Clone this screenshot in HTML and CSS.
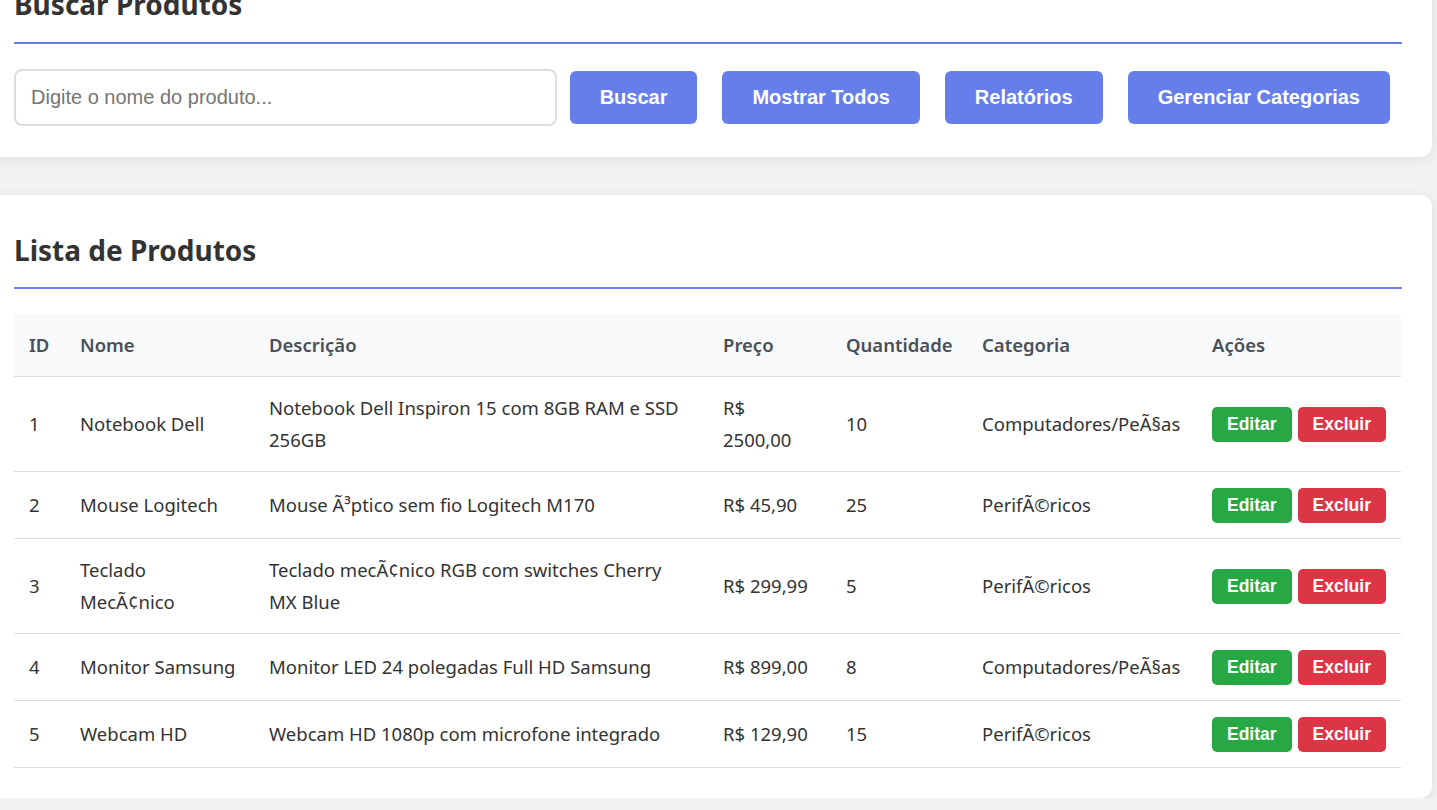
FILE: index.html
```html
<!DOCTYPE html>
<html lang="pt-BR">
<head>
<meta charset="utf-8">
<title>Produtos</title>
<link rel="stylesheet" href="styles.css">
</head>
<body>
<div class="page">
  <section class="card search-card">
    <h2 class="card-title">Buscar Produtos</h2>
    <div class="search-row">
      <input class="search-input" type="text" placeholder="Digite o nome do produto...">
      <button class="btn">Buscar</button>
      <button class="btn">Mostrar Todos</button>
      <button class="btn">Relatórios</button>
      <button class="btn">Gerenciar Categorias</button>
    </div>
  </section>

  <section class="card list-card">
    <h2 class="card-title">Lista de Produtos</h2>
    <table class="products">
      <colgroup>
        <col class="col-id">
        <col class="col-nome">
        <col class="col-desc">
        <col class="col-preco">
        <col class="col-qtd">
        <col class="col-cat">
        <col class="col-acoes">
      </colgroup>
      <thead>
        <tr>
          <th>ID</th>
          <th>Nome</th>
          <th>Descrição</th>
          <th>Preço</th>
          <th>Quantidade</th>
          <th>Categoria</th>
          <th>Ações</th>
        </tr>
      </thead>
      <tbody>
        <tr>
          <td>1</td>
          <td>Notebook Dell</td>
          <td>Notebook Dell Inspiron 15 com 8GB RAM e SSD 256GB</td>
          <td>R$ 2500,00</td>
          <td>10</td>
          <td class="cat">Computadores/PeÃ§as</td>
          <td><div class="actions"><button class="btn-sm btn-edit">Editar</button><button class="btn-sm btn-del">Excluir</button></div></td>
        </tr>
        <tr>
          <td>2</td>
          <td>Mouse Logitech</td>
          <td>Mouse Ã³ptico sem fio Logitech M170</td>
          <td>R$ 45,90</td>
          <td>25</td>
          <td class="cat">PerifÃ©ricos</td>
          <td><div class="actions"><button class="btn-sm btn-edit">Editar</button><button class="btn-sm btn-del">Excluir</button></div></td>
        </tr>
        <tr>
          <td>3</td>
          <td>Teclado MecÃ¢nico</td>
          <td>Teclado mecÃ¢nico RGB com switches Cherry MX Blue</td>
          <td>R$ 299,99</td>
          <td>5</td>
          <td class="cat">PerifÃ©ricos</td>
          <td><div class="actions"><button class="btn-sm btn-edit">Editar</button><button class="btn-sm btn-del">Excluir</button></div></td>
        </tr>
        <tr>
          <td>4</td>
          <td>Monitor Samsung</td>
          <td>Monitor LED 24 polegadas Full HD Samsung</td>
          <td>R$ 899,00</td>
          <td>8</td>
          <td class="cat">Computadores/PeÃ§as</td>
          <td><div class="actions"><button class="btn-sm btn-edit">Editar</button><button class="btn-sm btn-del">Excluir</button></div></td>
        </tr>
        <tr>
          <td>5</td>
          <td>Webcam HD</td>
          <td>Webcam HD 1080p com microfone integrado</td>
          <td>R$ 129,90</td>
          <td>15</td>
          <td class="cat">PerifÃ©ricos</td>
          <td><div class="actions"><button class="btn-sm btn-edit">Editar</button><button class="btn-sm btn-del">Excluir</button></div></td>
        </tr>
      </tbody>
    </table>
  </section>
</div>
</body>
</html>
```

FILE: styles.css
```css
* { box-sizing: border-box; }

html, body {
  margin: 0;
  padding: 0;
  background: #f2f2f2;
  overflow: hidden;
}

body {
  font-family: "Noto Sans", "Open Sans", sans-serif;
  font-size: 18.5px;
  line-height: 32px;
  color: #333;
}

.page {
  width: 1448px;
  margin: -49px 0 0 -16px;
}

.card {
  background: #fff;
  border-radius: 12px;
  box-shadow: 0 2px 12px rgba(0, 0, 0, 0.09);
  padding: 30px;
}

.search-card {
  padding-bottom: 31px;
  margin-bottom: 38px;
}

.list-card {
  padding-top: 32px;
}

.card-title {
  margin: 7px 0 25px;
  padding-bottom: 20px;
  border-bottom: 2px solid #667eea;
  font-size: 28px;
  line-height: 33.6px;
  font-weight: 700;
  color: #333;
}

.search-row {
  display: flex;
  align-items: center;
  gap: 13px;
}

.search-input {
  flex: 1;
  min-width: 0;
  height: 57px;
  padding: 15px;
  border: 2px solid #ddd;
  border-radius: 8px;
  font-family: "Liberation Sans", Arial, sans-serif;
  font-size: 20px;
  color: #333;
  outline: none;
}

.search-input::placeholder {
  color: #757575;
}

.btn {
  margin-right: 12px;
  padding: 15px 30px;
  border: none;
  border-radius: 6px;
  background: #667eea;
  color: #fff;
  font-family: "Liberation Sans", Arial, sans-serif;
  font-size: 20px;
  font-weight: 700;
  line-height: 23px;
  white-space: nowrap;
  cursor: pointer;
}

.products {
  width: 1387px;
  border-collapse: collapse;
  table-layout: fixed;
}

.col-id { width: 51px; }
.col-nome { width: 189px; }
.col-desc { width: 454px; }
.col-preco { width: 123px; }
.col-qtd { width: 136px; }
.col-cat { width: 230px; }
.col-acoes { width: 204px; }

.products th,
.products td {
  padding: 15px;
  text-align: left;
  vertical-align: middle;
  border-bottom: 1px solid #ddd;
}

.products th {
  background: #f8f9fa;
  font-weight: 600;
  color: #495057;
}

.products td.cat {
  white-space: nowrap;
}

.actions {
  display: flex;
  align-items: center;
  gap: 6px;
  min-height: 36px;
}

.btn-sm {
  padding: 7.5px 15px;
  border: none;
  border-radius: 5px;
  color: #fff;
  font-family: "Liberation Sans", Arial, sans-serif;
  font-size: 17.5px;
  font-weight: 700;
  line-height: 20px;
  cursor: pointer;
}

.btn-edit { background: #28a745; }
.btn-del { background: #dc3545; }
```
